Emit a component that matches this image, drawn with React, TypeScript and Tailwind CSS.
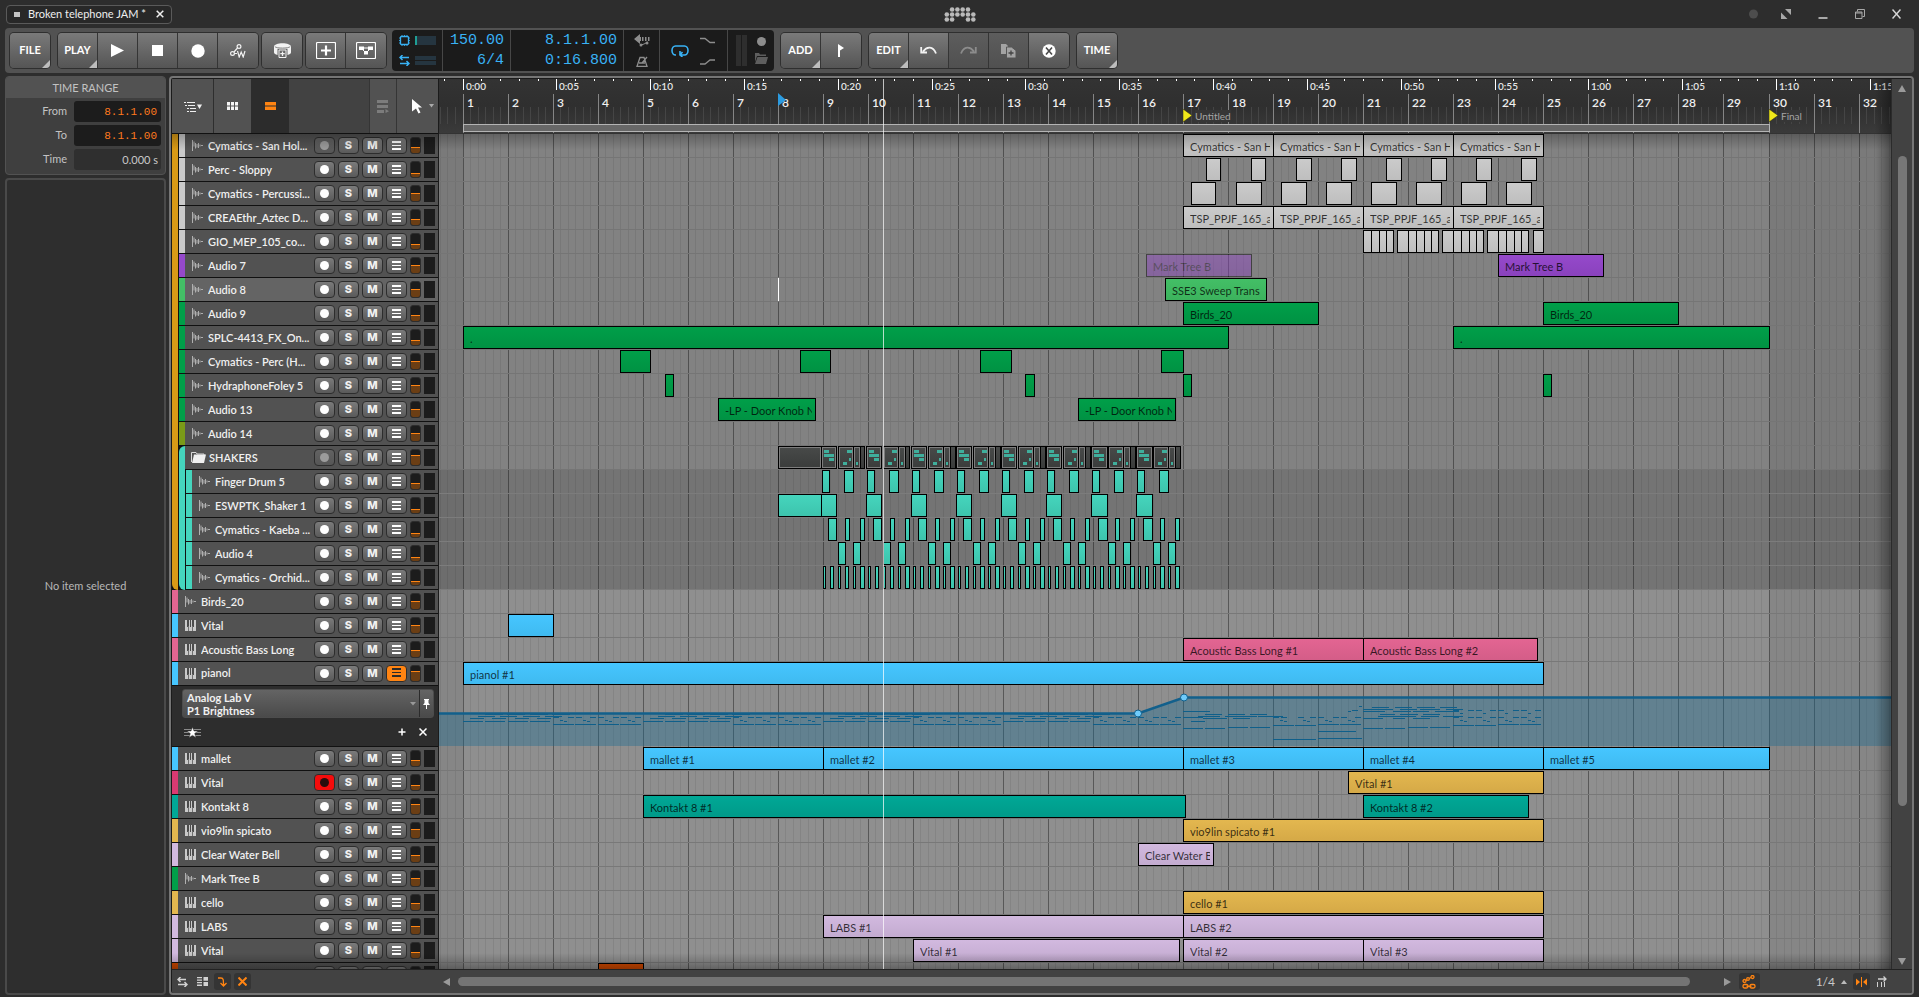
import type { ReactNode } from 'react'

const BAR = 45.035
const ORIGIN = 24
const BARS = Array.from({ length: 32 }, (_, i) => i + 1)
const LOOPS = [9, 10, 11, 12, 13, 14, 15, 16]

// bar position -> pixels from the left edge of the timeline
const bx = (bar: number) => ORIGIN + Math.floor((bar - 1) * BAR + 0.001)
const sx = (sec: number) => ORIGIN + Math.floor((sec / 2.4) * BAR)

type Tone = 'grey' | 'purple' | 'lime' | 'green' | 'teal' | 'sky' | 'pink' | 'gold' | 'sea' | 'lilac' | 'orange' | 'folder'

const TONES: Record<Tone, string> = {
  grey: 'from-[#cbcbcb] to-[#bebebe]',
  purple: 'from-[#9549cb] to-[#8a42bd]',
  lime: 'from-[#43bf66] to-[#3cb25d]',
  green: 'from-[#009f49] to-[#009243]',
  teal: 'from-[#45d5bd] to-[#3dc4ad]',
  sky: 'from-[#46c6ff] to-[#3fbaf0]',
  pink: 'from-[#e36592] to-[#d45d88]',
  gold: 'from-[#e3b74f] to-[#d5a947]',
  sea: 'from-[#00a896] to-[#009a89]',
  lilac: 'from-[#d2b9df] to-[#c3abd0]',
  orange: 'from-[#d44a00] to-[#c94600]',
  folder: 'from-[#484a49] to-[#3a3c3b]',
}

type Clip = { from: number; to: number; name?: string; tone: Tone; faded?: boolean; notes?: number[][] }

type Track = {
  name: string
  color: string
  kind: 'audio' | 'keys' | 'folder'
  vol: number
  rec?: 'off' | 'armed'
  selected?: boolean
  automation?: boolean
  clips?: Clip[]
}

const every = (tone: Tone, bars: number[], parts: number[][]): Clip[] =>
  bars.flatMap((b) => parts.map(([a, z]) => ({ from: b + a, to: b + z, tone })))

const chain = (tone: Tone, name: string, edges: number[]): Clip[] =>
  edges.slice(1).map((to, i) => ({ from: edges[i], to, tone, name }))

const GIO_EDGES = [
  [21, 21.18, 21.34, 21.51, 21.67],
  [21.76, 22, 22.18, 22.34, 22.51, 22.67],
  [22.76, 23, 23.18, 23.34, 23.51, 23.67],
  [23.76, 24, 24.18, 24.34, 24.51, 24.67],
  [24.76, 25],
]

const GROUP_TRACKS: Track[] = [
  { name: 'Cymatics - San Hol...', color: 'bg-[#cacaca]', kind: 'audio', vol: 9, rec: 'off', clips: chain('grey', 'Cymatics - San H', [17, 19, 21, 23, 25]) },
  { name: 'Perc - Sloppy', color: 'bg-[#cacaca]', kind: 'audio', vol: 11, clips: every('grey', [17, 18, 19, 20, 21, 22, 23, 24], [[0.5, 0.83]]) },
  { name: 'Cymatics - Percussi...', color: 'bg-[#cacaca]', kind: 'audio', vol: 7, clips: every('grey', [17, 18, 19, 20, 21, 22, 23, 24], [[0.17, 0.72]]) },
  { name: 'CREAEthr_Aztec D...', color: 'bg-[#cacaca]', kind: 'audio', vol: 9, clips: chain('grey', 'TSP_PPJF_165_a', [17, 19, 21, 23, 25]) },
  { name: 'GIO_MEP_105_co...', color: 'bg-[#cacaca]', kind: 'audio', vol: 10, clips: GIO_EDGES.flatMap((e) => chain('grey', '', e)) },
  {
    name: 'Audio 7', color: 'bg-[#9549cb]', kind: 'audio', vol: 7,
    clips: [
      { from: 16.18, to: 18.51, name: 'Mark Tree B', tone: 'purple', faded: true },
      { from: 24, to: 26.33, name: 'Mark Tree B', tone: 'purple' },
    ],
  },
  { name: 'Audio 8', color: 'bg-[#43bf66]', kind: 'audio', vol: 7, selected: true, clips: [{ from: 16.6, to: 18.85, name: 'SSE3 Sweep Trans', tone: 'lime' }] },
  {
    name: 'Audio 9', color: 'bg-[#009f49]', kind: 'audio', vol: 9,
    clips: [
      { from: 17, to: 20, name: 'Birds_20', tone: 'green' },
      { from: 25, to: 28, name: 'Birds_20', tone: 'green' },
    ],
  },
  {
    name: 'SPLC-4413_FX_On...', color: 'bg-[#009f49]', kind: 'audio', vol: 10,
    clips: [
      { from: 1, to: 18, name: '.', tone: 'green' },
      { from: 23, to: 30, name: '.', tone: 'green' },
    ],
  },
  {
    name: 'Cymatics - Perc (H...', color: 'bg-[#009f49]', kind: 'audio', vol: 7,
    clips: [...every('green', [4, 8, 12], [[0.5, 1.17]]), { from: 16.52, to: 17, tone: 'green' }],
  },
  {
    name: 'HydraphoneFoley 5', color: 'bg-[#009f49]', kind: 'audio', vol: 7,
    clips: [...every('green', [5, 13], [[0.5, 0.68]]), ...every('green', [17, 25], [[0, 0.18]])],
  },
  {
    name: 'Audio 13', color: 'bg-[#009f49]', kind: 'audio', vol: 7,
    clips: [
      { from: 6.67, to: 8.83, name: '-LP - Door Knob N', tone: 'green' },
      { from: 14.67, to: 16.83, name: '-LP - Door Knob N', tone: 'green' },
    ],
  },
  { name: 'Audio 14', color: 'bg-[#7a9a18]', kind: 'audio', vol: 7 },
]

const FOLDER: Track = {
  name: 'SHAKERS', color: 'bg-[#45d5bd]', kind: 'folder', vol: 5, rec: 'off',
  clips: [
    { from: 8, to: 8.963, tone: 'folder', notes: [] },
    ...LOOPS.flatMap((b): Clip[] => [
      { from: b - 0.037, to: b + 0.3, tone: 'folder', notes: [[1, 2, 5], [1, 6, 10], [6, 10, 5]] },
      { from: b + 0.335, to: b + 0.674, tone: 'folder', notes: [[7, 2, 5], [9, 10, 2], [3, 14, 4]] },
      { from: b + 0.674, to: b + 0.82, tone: 'folder', notes: [[1, 14, 2]] },
      { from: b + 0.83, to: b + 0.925, tone: 'folder' },
    ]),
  ],
}

const SHAKERS: Track[] = [
  { name: 'Finger Drum 5', color: 'bg-[#45d5bd]', kind: 'audio', vol: 9, clips: every('teal', LOOPS, [[-0.02, 0.14], [0.47, 0.66]]) },
  { name: 'ESWPTK_Shaker 1', color: 'bg-[#45d5bd]', kind: 'audio', vol: 11, clips: [{ from: 8, to: 8.963, tone: 'teal' }, ...every('teal', LOOPS, [[-0.037, 0.3]])] },
  { name: 'Cymatics - Kaeba ...', color: 'bg-[#45d5bd]', kind: 'audio', vol: 11, clips: every('teal', LOOPS, [[0.11, 0.3], [0.49, 0.58], [0.83, 0.92]]) },
  { name: 'Audio 4', color: 'bg-[#45d5bd]', kind: 'audio', vol: 11, clips: every('teal', LOOPS, [[0.335, 0.49], [0.667, 0.823]]) },
  {
    name: 'Cymatics - Orchid...', color: 'bg-[#45d5bd]', kind: 'audio', vol: 11,
    clips: every('teal', LOOPS, [[0, 0.05], [0.156, 0.23], [0.335, 0.385], [0.49, 0.57], [0.667, 0.72], [0.83, 0.91]]),
  },
]

const ROOT_TRACKS: Track[] = [
  { name: 'Birds_20', color: 'bg-[#e36592]', kind: 'audio', vol: 7 },
  { name: 'Vital', color: 'bg-[#46c6ff]', kind: 'keys', vol: 7, clips: [{ from: 2, to: 3, tone: 'sky' }] },
  {
    name: 'Acoustic Bass Long', color: 'bg-[#e36592]', kind: 'keys', vol: 8,
    clips: [
      { from: 17, to: 21, name: 'Acoustic Bass Long #1', tone: 'pink' },
      { from: 21, to: 24.85, name: 'Acoustic Bass Long #2', tone: 'pink' },
    ],
  },
  { name: 'pianol', color: 'bg-[#46c6ff]', kind: 'keys', vol: 5, automation: true, clips: [{ from: 1, to: 25, name: 'pianol #1', tone: 'sky' }] },
  {
    name: 'mallet', color: 'bg-[#46c6ff]', kind: 'keys', vol: 9,
    clips: [
      { from: 5, to: 9, name: 'mallet #1', tone: 'sky' },
      { from: 9, to: 17, name: 'mallet #2', tone: 'sky' },
      { from: 17, to: 21, name: 'mallet #3', tone: 'sky' },
      { from: 21, to: 25, name: 'mallet #4', tone: 'sky' },
      { from: 25, to: 30, name: 'mallet #5', tone: 'sky' },
    ],
  },
  { name: 'Vital', color: 'bg-[#d93a72]', kind: 'keys', vol: 10, rec: 'armed', clips: [{ from: 20.67, to: 25, name: 'Vital #1', tone: 'gold' }] },
  {
    name: 'Kontakt 8', color: 'bg-[#00a896]', kind: 'keys', vol: 5,
    clips: [
      { from: 5, to: 17.05, name: 'Kontakt 8 #1', tone: 'sea' },
      { from: 21, to: 24.67, name: 'Kontakt 8 #2', tone: 'sea' },
    ],
  },
  { name: 'vio9lin spicato', color: 'bg-[#e3b74f]', kind: 'keys', vol: 6, clips: [{ from: 17, to: 25, name: 'vio9lin spicato #1', tone: 'gold' }] },
  { name: 'Clear Water Bell', color: 'bg-[#d2b9df]', kind: 'keys', vol: 8, clips: [{ from: 16, to: 17.67, name: 'Clear Water B', tone: 'lilac' }] },
  { name: 'Mark Tree B', color: 'bg-[#009f49]', kind: 'audio', vol: 7 },
  { name: 'cello', color: 'bg-[#e3b74f]', kind: 'keys', vol: 8, clips: [{ from: 17, to: 25, name: 'cello #1', tone: 'gold' }] },
  {
    name: 'LABS', color: 'bg-[#d2b9df]', kind: 'keys', vol: 7,
    clips: [
      { from: 9, to: 17, name: 'LABS #1', tone: 'lilac' },
      { from: 17, to: 25, name: 'LABS #2', tone: 'lilac' },
    ],
  },
  {
    name: 'Vital', color: 'bg-[#d2b9df]', kind: 'keys', vol: 9,
    clips: [
      { from: 11, to: 16.92, name: 'Vital #1', tone: 'lilac' },
      { from: 17, to: 21, name: 'Vital #2', tone: 'lilac' },
      { from: 21, to: 25, name: 'Vital #3', tone: 'lilac' },
    ],
  },
  { name: '', color: 'bg-[#d44a00]', kind: 'keys', vol: 7, clips: [{ from: 4, to: 5, tone: 'orange' }] },
]

/* ---------- title bar and toolbar ---------- */

function TitleBar() {
  const dots = [
    [9, [2, 3, 4, 5]],
    [14, [1, 2, 3, 4, 5, 6]],
    [19, [1, 2, 5, 6]],
  ] as [number, number[]][]
  return (
    <header className="flex h-7 shrink-0 items-center px-[6px]">
      <div className="flex flex-1 pr-3">
        <div className="flex h-[19px] items-center rounded-[4px] border border-[#5a5a5a] bg-[#282828] px-[7px] text-[11px] text-[#eee]">
          <span className="mr-[8px] h-[5px] w-[6px] bg-[#c4c4c4]" />
          <span className="leading-4">Broken telephone JAM *</span>
          <button type="button" aria-label="Close project" className="ml-[10px]">
            <svg width="8" height="8" viewBox="0 0 8 8" stroke="#f0f0f0" strokeWidth="1.5"><path d="M.7.7l6.6 6.6M7.3.7L.7 7.3" /></svg>
          </button>
        </div>
      </div>
      <svg width="34" height="28" viewBox="0 0 34 28" fill="#b9b9b9">
        {dots.map(([y, cols]) => cols.map((c) => <circle key={`${y}-${c}`} cx={c * 5.3 - 1.5} cy={y + 0.5} r="2.3" />))}
      </svg>
      <div className="flex flex-1 items-center justify-end gap-[27px] pr-3">
        <svg className="-mr-1" width="9" height="10" viewBox="0 0 9 10"><circle cx="4.500" cy="5" r="4.500" fill="#4d4d4d" /></svg>
        <button type="button" aria-label="Full screen">
          <svg width="10" height="10" viewBox="0 0 10 10" fill="#a8a8a8"><path d="M4 0h6v6zM0 3.500v6.500h6.500z" /></svg>
        </button>
        <button type="button" aria-label="Minimize">
          <svg width="10" height="10" viewBox="0 0 10 10"><path d="M.5 8h9v2h-9z" fill="#a8a8a8" /></svg>
        </button>
        <button type="button" aria-label="Restore">
          <svg width="10" height="10" viewBox="0 0 10 10" fill="none" stroke="#a8a8a8"><path d="M2.500 2.500V.5h7v7h-2M.5 3h6.500v6.500h-6.500zM.5 4h6.500" /></svg>
        </button>
        <button type="button" aria-label="Close">
          <svg width="9" height="10" viewBox="0 0 9 10" stroke="#d6d6d6" strokeWidth="1.500"><path d="M.5.5l8 9M8.500.5l-8 9" /></svg>
        </button>
      </div>
    </header>
  )
}

function ButtonGroup({ children }: { children: ReactNode }) {
  return <div className="flex h-[35px] overflow-hidden rounded-[4px] shadow-[0_0_0_1px_#2f2f2f]">{children}</div>
}

function ToolButton({ label, corner, dim, children }: { label: string; corner?: boolean; dim?: boolean; children?: ReactNode }) {
  return (
    <button
      type="button"
      aria-label={label}
      className={`relative flex w-10 items-center justify-center border-r border-[#353535] text-[11px] font-bold text-white last:border-r-0 ${
        dim ? 'bg-linear-to-b from-[#5d5d5d] to-[#505050]' : 'bg-linear-to-b from-[#7a7a7a] to-[#555]'
      }`}
    >
      {children ?? label}
      {corner && (
        <svg className="absolute right-0 bottom-0" width="8" height="8" viewBox="0 0 8 8"><path d="M8 0v8H0z" fill="#bdbdbd" /></svg>
      )}
    </button>
  )
}

function Display() {
  const field = 'w-full bg-transparent text-right font-["Liberation_Mono",monospace] text-[15px] leading-5 text-[#39b2f5] outline-none'
  return (
    <div className="ml-[6px] flex h-[41px] w-[382px] overflow-hidden rounded-[4px] bg-[#1b1b1b]">
      <div className="flex w-[51px] flex-col justify-around border-r border-[#474747] pl-[7px]">
        <div className="flex items-center gap-[5px]">
          <svg width="11" height="11" viewBox="0 0 11 11" fill="none" stroke="#39b2f5">
            <rect x="1.500" y="1.500" width="8" height="8" rx="1" strokeWidth="1.300" />
            <path d="M3 .2v1M5.500.2v1M8 .2v1M3 9.800v1M5.500 9.800v1M8 9.800v1M.2 3h1M.2 5.500h1M.2 8h1M9.800 3h1M9.800 5.500h1M9.800 8h1" />
          </svg>
          <span className="h-[9px] w-[21px] border-l-2 border-[#1f9e94] bg-[#253540]" />
        </div>
        <div className="flex items-center gap-[5px]">
          <svg width="11" height="11" viewBox="0 0 11 11" fill="none" stroke="#39b2f5" strokeWidth="1.500"><path d="M10 2.500H1M3.500 0L1 2.500 3.500 5M1 8.500h9M7.500 6L10 8.500 7.500 11" /></svg>
          <span className="flex flex-col gap-px">
            <span className="h-[4px] w-[21px] bg-[#253540]" />
            <span className="h-[4px] w-[21px] bg-[#253540]" />
          </span>
        </div>
      </div>
      <div className="flex w-[68px] flex-col justify-center border-r border-[#474747] pt-px pr-[6px]">
        <input aria-label="Tempo" className={field} defaultValue="150.00" />
        <input aria-label="Time signature" className={field} defaultValue="6/4" />
      </div>
      <div className="flex w-[113px] flex-col justify-center border-r border-[#474747] pt-px pr-[6px]">
        <input aria-label="Song position" className={field} defaultValue="8.1.1.00" />
        <input aria-label="Song time" className={field} defaultValue="0:16.800" />
      </div>
      <div className="flex w-9 flex-col items-center justify-around border-r border-[#474747]">
        <svg width="16" height="13" viewBox="0 0 16 13" fill="#8d8d8d"><path d="M0 5l6-5v3h1v4H6v3zM8 3h1.500v4H8zM11 3h1.500v4H11zM14 3h1.500v4H14z" /><path d="M7 11l3-1 4-2" stroke="#8d8d8d" fill="none" /><circle cx="7" cy="11" r="1.500" /><circle cx="13" cy="9" r="1.500" /></svg>
        <svg width="12" height="11" viewBox="0 0 12 11" fill="none" stroke="#8d8d8d" strokeWidth="1.300"><path d="M1 10.300h10L8 1.500H4zM3 7h6M6 7L11 1" /></svg>
      </div>
      <div className="flex w-[68px] items-center justify-between border-r border-[#474747] pr-[12px] pl-[11px]">
        <svg width="18" height="12" viewBox="0 0 18 12" fill="none" stroke="#39b2f5" strokeWidth="1.600"><path d="M5 10H4.500A3.500 4.500 0 0 1 4.500 1h9a3.500 4.500 0 0 1 0 9H9M11.500 7L9 10l2.500 2M9 10V6" /></svg>
        <svg width="15" height="30" viewBox="0 0 15 30" fill="none" stroke="#8d8d8d" strokeWidth="1.300"><path d="M0 2.500h5l5 4h5M0 28h5l5-4h5" /></svg>
      </div>
      <div className="flex flex-1 items-center justify-between pr-[6px] pl-[8px]">
        <span className="flex gap-px"><span className="h-[31px] w-[5px] bg-[#2e2e2e]" /><span className="h-[31px] w-[5px] bg-[#2e2e2e]" /></span>
        <span className="flex flex-col items-center gap-[7px]">
          <svg width="9" height="9" viewBox="0 0 9 9"><circle cx="4.500" cy="4.500" r="4.500" fill="#8d8d8d" /></svg>
          <svg width="14" height="11" viewBox="0 0 14 11" fill="#5e5e5e"><path d="M1 0h4l1 1.500h6V3H3L1 9zM3.500 4H14l-2 7H1z" /></svg>
        </span>
      </div>
    </div>
  )
}

function Toolbar() {
  return (
    <div className="mx-[5px] flex h-[45px] shrink-0 items-center rounded-[4px] bg-[#525252] pl-[5px]">
      <ButtonGroup><ToolButton label="FILE" corner /></ButtonGroup>
      <div className="w-2" />
      <ButtonGroup>
        <ToolButton label="PLAY" corner />
        <ToolButton label="Start"><svg width="13" height="13" viewBox="0 0 13 13"><path d="M0 0l13 6.500L0 13z" fill="#fff" /></svg></ToolButton>
        <ToolButton label="Stop"><svg width="11" height="11"><path d="M0 0h11v11H0z" fill="#fff" /></svg></ToolButton>
        <ToolButton label="Record"><svg width="14" height="14"><circle cx="7" cy="7" r="6.700" fill="#fff" /></svg></ToolButton>
        <ToolButton label="Write automation">
          <svg width="16" height="14" viewBox="0 0 16 14" fill="none" stroke="#f2f2f2" strokeWidth="1.200"><circle cx="2.500" cy="9.500" r="1.900" /><circle cx="9" cy="2.500" r="1.900" /><path d="M4 8l3.500-4M4.400 9.500H7M7.500 7l1.700 6 2-5 2 5L15 7" /></svg>
        </ToolButton>
      </ButtonGroup>
      <div className="w-1" />
      <ButtonGroup>
        <ToolButton label="Save">
          <svg width="17" height="15" viewBox="0 0 17 15">
            <path d="M0 3.500C0 1.500 4 .2 8.500.2S17 1.500 17 3.500V9.500c0 1.200-1.500 2-3.500 2.500V5.800h-10V12C1.500 11.500 0 10.700 0 9.500z" fill="#f2f2f2" />
            <path d="M.8 3.700c2 1.800 13.400 1.800 15.400 0" stroke="#8a8a8a" fill="none" />
            <path d="M5 7h7v7.500H5z" stroke="#f2f2f2" fill="#666" />
            <path d="M8.500 8.500v4.500M6.300 10.700h4.400" stroke="#f2f2f2" strokeWidth="1.300" />
          </svg>
        </ToolButton>
      </ButtonGroup>
      <div className="w-1" />
      <ButtonGroup>
        <ToolButton label="Add device"><svg width="20" height="17" viewBox="0 0 20 17" fill="none" stroke="#fff"><rect x=".5" y=".5" width="19" height="16" rx="1" strokeWidth="1.200" /><path d="M10 3.500v10M5 8.500h10" strokeWidth="2.200" /></svg></ToolButton>
        <ToolButton label="Add modulator"><svg width="20" height="17" viewBox="0 0 20 17" fill="#fff"><rect x=".5" y=".5" width="19" height="16" rx="1" stroke="#fff" fill="none" strokeWidth="1.200" /><path d="M3 4.500h5v3.500H3zM12 4.500h5v3.500h-5zM8 9h4v3.500H8z" /><path d="M8 6h4M7 8l2 2M13 8l-2 2" stroke="#fff" /></svg></ToolButton>
      </ButtonGroup>
      <Display />
      <div className="w-[7px]" />
      <ButtonGroup>
        <ToolButton label="ADD" corner />
        <ToolButton label="Add cue marker"><svg width="7" height="13" viewBox="0 0 7 13"><path d="M0 0l6 4-4 2.500V13H0z" fill="#fff" /></svg></ToolButton>
      </ButtonGroup>
      <div className="w-2" />
      <ButtonGroup>
        <ToolButton label="EDIT" corner />
        <ToolButton label="Undo"><svg width="17" height="9" viewBox="0 0 17 9" fill="none" stroke="#f2f2f2" strokeWidth="1.800"><path d="M3 5.500C7 0 13 0 16 7.500M1.200 1v5.500H7" /></svg></ToolButton>
        <ToolButton label="Redo" dim><svg width="17" height="9" viewBox="0 0 17 9" fill="none" stroke="#8c8c8c" strokeWidth="1.800"><path d="M14 5.500C10 0 4 0 1 7.500M15.800 1v5.500H10" /></svg></ToolButton>
        <ToolButton label="Duplicate" dim><svg width="15" height="14" viewBox="0 0 15 14" fill="#a3a3a3"><path d="M0 0h5l2 2v8H0z" /><path d="M5.500 3h5L15 6.500V14H5.500z" stroke="#565656" /><path d="M10 6.500v5M7.500 9h5" stroke="#444" strokeWidth="1.300" /></svg></ToolButton>
        <ToolButton label="Delete"><svg width="14" height="14" viewBox="0 0 14 14"><circle cx="7" cy="7" r="6.700" fill="#fff" /><path d="M4 3.500l6 7M10 3.500l-6 7" stroke="#4a4a4a" strokeWidth="1.600" /></svg></ToolButton>
      </ButtonGroup>
      <div className="w-2" />
      <ButtonGroup><ToolButton label="TIME" corner /></ButtonGroup>
    </div>
  )
}

/* ---------- inspector ---------- */

function Inspector() {
  const rows = [
    ['From', '8.1.1.00', 'bg-[#1c1c1c] pr-[4px] font-["Liberation_Mono",monospace] text-[#ff7a1e]'],
    ['To', '8.1.1.00', 'bg-[#1c1c1c] pr-[4px] font-["Liberation_Mono",monospace] text-[#ff7a1e]'],
    ['Time', '0.000 s', 'bg-[#2f2f2f] pr-[3px] text-[#c9c9c9]'],
  ]
  return (
    <aside className="flex w-[161px] shrink-0 flex-col gap-[3px]">
      <div className="overflow-hidden rounded-[4px] border border-[#525252] bg-[#3f3f3f]">
        <h2 className="h-[21px] bg-[#525252] text-center text-[11px] leading-[22px] text-[#c2c2c2]">TIME RANGE</h2>
        <div className="flex flex-col gap-[3px] pt-[3px] pr-[4px] pb-1">
          {rows.map(([label, value, style]) => (
            <label key={label} className="flex items-center gap-[7px] text-[11px] text-[#c2c2c2]">
              <span className="flex-1 text-right">{label}</span>
              <input className={`h-[21px] w-[87px] rounded-[3px] text-right text-[11px] outline-none ${style}`} defaultValue={value} />
            </label>
          ))}
        </div>
      </div>
      <div className="flex flex-1 items-center justify-center rounded-[4px] border-2 border-[#4a4a4a] bg-[#2e2e2e] text-[11px] text-[#b8b8b8]">
        No item selected
      </div>
    </aside>
  )
}

/* ---------- track headers ---------- */

function KindIcon({ kind }: { kind: Track['kind'] }) {
  if (kind === 'folder') {
    return (
      <svg className="-ml-px mr-[3px] shrink-0" width="15" height="11" viewBox="0 0 15 11"><path d="M.5 10V.5H5l1 1.500h7V3" fill="none" stroke="#d8d8d8" /><path d="M3 2.500h12l-2 8.500H1z" fill="#efefef" /></svg>
    )
  }
  if (kind === 'keys') {
    return (
      <svg className="mr-[5px] shrink-0" width="11" height="11" viewBox="0 0 11 11"><path d="M0 0h11v11H0z" fill="#c9c9c9" /><path d="M2 0h2v7H2zM7 0h2v7H7zM5 0h1v7H5z" fill="#4b4b4b" /><path d="M3.500 6v5M7.500 6v5" stroke="#707070" /></svg>
    )
  }
  return (
    <svg className="mr-[5px] shrink-0" width="11" height="11" viewBox="0 0 11 11" stroke="#b0b0b0"><path d="M.5 0v11M2 1.500v5M3.500 3v5.500M5 4v3.500M6.500 3v5M8 4.500v2M9 5.500h2" /></svg>
  )
}

function MixButton({ label, tone, children }: { label: string; tone?: string; children: ReactNode }) {
  return (
    <button
      type="button"
      aria-label={label}
      className={`mr-[3px] flex h-[17px] w-[21px] shrink-0 items-center justify-center rounded-[4px] border border-[#2d2d2d] font-[Inter,sans-serif] text-[11px] font-extrabold text-[#f2f2f2] ${
        tone ?? 'bg-linear-to-b from-[#7b7b7b] to-[#5a5a5a]'
      }`}
    >
      {children}
    </button>
  )
}

function TrackHeader({ track }: { track: Track }) {
  const off = track.rec === 'off'
  const armed = track.rec === 'armed'
  return (
    <div className="flex bg-[#111]">
      {track.kind !== 'folder' && <div className={`mb-px w-[6px] shrink-0 ${track.automation ? '-mb-[60px] relative z-10' : ''} ${track.color}`} />}
      <div className={`mb-px flex h-[23px] min-w-0 flex-1 items-center pl-[7px] ${track.automation ? 'mb-0 h-6 pb-px' : ''} ${track.selected ? 'bg-[#646464]' : 'bg-[#525252]'}`}>
        <KindIcon kind={track.kind} />
        <span className="min-w-0 flex-1 overflow-hidden text-[11px] leading-4 font-semibold whitespace-nowrap text-[#f0f0f0]">{track.name}</span>
        <div className="flex w-[124px] shrink-0 items-center">
          <MixButton label="Record arm" tone={armed ? 'bg-[#f50c0c]' : off ? 'bg-linear-to-b from-[#626262] to-[#565656]' : undefined}>
            <svg width="9" height="9"><circle cx="4.500" cy="4.500" r="4.500" fill={armed ? '#2a0d0d' : off ? '#9b9b9b' : '#fff'} /></svg>
          </MixButton>
          <MixButton label="Solo">S</MixButton>
          <MixButton label="Mute">M</MixButton>
          <MixButton label="Automation lanes" tone={track.automation ? 'bg-[#ff8412]' : undefined}>
            <svg width="9" height="10"><path d="M0 0h9v2H0zM0 4h9v1H0zM0 7h9v2H0z" fill={track.automation ? '#2b2b2b' : '#fff'} /></svg>
          </MixButton>
          <span className="flex h-[17px] w-[11px] flex-col justify-end overflow-hidden rounded-[3px] border border-[#2d2d2d] bg-[#1c1c1c]">
            <span className="border-t border-[#ff8412] bg-[#6b3e14]" style={{ height: 15 - track.vol }} />
          </span>
          <span className="ml-[3px] h-[17px] w-[11px] bg-[#1c1c1c]" />
        </div>
      </div>
    </div>
  )
}

function AutomationHeader() {
  return (
    <div className="flex h-[61px] flex-col border-b border-[#111] bg-[#2d2d2d] pt-[3px] pr-[4px] pl-[10px]">
      <div className="flex h-[29px] shrink-0 overflow-hidden rounded-[3px] border border-[#4c4c4c] bg-linear-to-b from-[#646464] to-[#4a4a4a]">
        <button type="button" className="flex flex-1 items-center border-r border-[#2b2b2b] pr-[3px] pl-1 text-left text-[11px] leading-[13px] font-bold text-[#f0f0f0]">
          <span className="flex-1">Analog Lab V<br />P1 Brightness</span>
          <svg width="6" height="4"><path d="M0 0h6L3 3.500z" fill="#999" /></svg>
        </button>
        <button type="button" aria-label="Pin lane" className="flex w-[13px] items-center justify-center">
          <svg width="7" height="10" viewBox="0 0 7 10" fill="#fff"><path d="M1 0h5v1H5.500v3L7 6H4v4H3V6H0l1.500-2V1H1z" /></svg>
        </button>
      </div>
      <div className="flex flex-1 items-center justify-between">
        <svg className="ml-[2px]" width="17" height="11" viewBox="0 0 17 11"><path d="M0 2.500h17M0 5.500h17M0 8.500h17" stroke="#8a8a8a" /><path d="M8.500 0l1.500 4h4l-3.300 2.500L12 10.800 8.500 8.300 5 10.800l1.300-4.300L3 4h4z" fill="#fff" stroke="#2d2d2d" strokeWidth=".5" /></svg>
        <span className="flex items-center gap-[13px] pr-[7px]">
          <button type="button" aria-label="Add lane"><svg width="8" height="8" stroke="#fff" strokeWidth="1.500"><path d="M4 .5v7M.5 4h7" /></svg></button>
          <button type="button" aria-label="Remove lane"><svg width="8" height="8" stroke="#fff" strokeWidth="1.500"><path d="M.5.5l7 7M7.500.5l-7 7" /></svg></button>
        </span>
      </div>
    </div>
  )
}

function TrackToolbar() {
  return (
    <div className="flex h-[54px] shrink-0 bg-[#424242] text-white">
      <button type="button" aria-label="Track view options" className="flex w-[42px] items-center justify-center border-r border-[#2e2e2e] bg-[#525252]">
        <svg width="18" height="11" viewBox="0 0 18 11"><path d="M0 1.500h2M3 1.500h8M1 4.500h2M4 4.500h7M3 7.500h2M6 7.500h6M3 10.500h2M6 10.500h6" stroke="#f0f0f0" /><path d="M13 3.500h5L15.500 8z" fill="#f0f0f0" /></svg>
      </button>
      <button type="button" aria-label="Launcher" className="flex w-[37px] items-center justify-center bg-[#525252]">
        <svg width="11" height="8"><path d="M0 0h3v3.500H0zM4 0h3v3.500H4zM8 0h3v3.500H8zM0 4.500h3V8H0zM4 4.500h3V8H4zM8 4.500h3V8H8z" fill="#f5f5f5" /></svg>
      </button>
      <button type="button" aria-label="Arranger" className="flex w-[38px] items-center justify-center bg-[#2c2c2c]">
        <svg width="11" height="8"><path d="M0 0h11v3.500H0zM0 4.500h11V8H0z" fill="#ff8412" /></svg>
      </button>
      <div className="flex-1" />
      <button type="button" aria-label="Follow" className="flex w-[27px] items-center justify-center border-l border-[#353535] bg-[#525252]">
        <svg width="12" height="13" viewBox="0 0 12 13" fill="#7c7c7c"><path d="M0 0h11v3H0zM0 5h11v3H0zM0 10h7v3H0zM8.500 9L12 11.200 8.500 13z" /></svg>
      </button>
      <button type="button" aria-label="Pointer tool" className="flex w-[42px] items-center justify-end gap-[7px] border-l border-[#353535] bg-[#525252] pr-[4px]">
        <svg width="10" height="15" viewBox="0 0 10 15"><path d="M0 0l10 8.500H6l2.500 5-2 1-2.500-5L0 12.500z" fill="#fff" /></svg>
        <svg width="5" height="4"><path d="M0 0h5L2.500 3.500z" fill="#aaa" /></svg>
      </button>
    </div>
  )
}

/* ---------- timeline ---------- */

function Ruler() {
  return (
    <div className="relative h-[54px] shrink-0 overflow-hidden bg-linear-to-b from-[#333] via-[#2f2f2f] to-[#3a3a3a]">
      {Array.from({ length: 77 }, (_, i) => i - 1).map((s) => (
        <span key={s} className={`absolute top-0 w-px bg-white ${s % 5 === 0 ? 'h-[11px]' : 'h-[2px]'}`} style={{ left: sx(s) }} />
      ))}
      {Array.from({ length: 16 }, (_, i) => i * 5).map((s) => (
        <span key={s} className="absolute top-[2px] text-[10px] leading-[11px] font-semibold text-[#e6e6e6]" style={{ left: sx(s) + 3 }}>
          {Math.floor(s / 60)}:{String(s % 60).padStart(2, '0')}
        </span>
      ))}
      {Array.from({ length: 200 }, (_, i) => i - 3).map((b) => (
        <span key={b} className="absolute top-[28px] h-[17px] w-px bg-[#454545]" style={{ left: bx(1 + b / 6) }} />
      ))}
      {BARS.map((b) => (
        <span key={b} className="absolute top-[15px] h-[39px] border-l border-[#858585] pl-[3px] text-[12px] leading-[18px] font-semibold text-[#f0f0f0]" style={{ left: bx(b) }}>
          {b}
        </span>
      ))}
      <svg className="absolute top-[14px]" style={{ left: bx(8) }} width="9" height="13"><path d="M0 0l8 7-8 6z" fill="#2b9be0" /></svg>
      {[{ bar: 17, name: 'Untitled' }, { bar: 30, name: 'Final' }].map((m) => (
        <div key={m.name} className="absolute top-[30px] flex items-center gap-[3px] text-[10px] leading-3 text-[#a5a5a5]" style={{ left: bx(m.bar) }}>
          <svg width="9" height="13"><path d="M0 0l9 6.500L0 13z" fill="#f0e81a" stroke="#2b2b10" strokeWidth=".5" /></svg>
          <span className="bg-[#363636]">{m.name}</span>
        </div>
      ))}
      <div className="absolute top-[45px] h-[8px] border border-[#b3b3b3] bg-[#676767]" style={{ left: bx(1), width: bx(30) - bx(1) + 1 }} />
    </div>
  )
}

function ClipBlock({ clip }: { clip: Clip }) {
  const width = bx(clip.to) - bx(clip.from) + 1
  return (
    <div
      className={`absolute top-0 z-10 h-[23px] overflow-hidden border border-black bg-linear-to-b ${TONES[clip.tone]} ${clip.faded ? 'opacity-45' : ''}`}
      style={{ left: bx(clip.from), width }}
    >
      {clip.name && <div className="mr-[3px] ml-[6px] overflow-hidden text-[11px] leading-[24px] whitespace-nowrap text-black/75">{clip.name}</div>}
      {clip.notes && (
        <div className="absolute inset-0 overflow-hidden border border-[#7d7d7d]">
          <svg className="block" width="20" height="19" fill="#3fae9c">
            {clip.notes.map(([x, y, w]) => <rect key={`${x}-${y}`} x={x} y={y} width={w} height="3" />)}
          </svg>
        </div>
      )}
    </div>
  )
}

function Lane({ track, bg, line }: { track: Track; bg: string; line: string }) {
  return (
    <div className={`relative flex h-6 flex-col justify-end ${bg}`}>
      {!track.automation && <div className={`relative z-[5] h-px ${line}`} />}
      {track.selected && <div className="absolute top-0 z-10 h-[23px] w-px bg-white" style={{ left: bx(8) }} />}
      {track.clips?.map((c) => <ClipBlock key={`${c.from}`} clip={c} />)}
    </div>
  )
}

// note segments as [x offset, y, width], each set spans four bars
const VERSE = [
  ...[0, 22, 45, 67].map((x) => [x, 35, 20]),
  ...[90, 112, 135, 157].map((x) => [x, 38, 21]),
  ...[7, 29, 52, 74].map((x) => [x, 32, 14]),
  ...[15, 37, 60, 82].map((x) => [x, 30, 17]),
  ...[22, 44, 67, 89].map((x) => [x, 28, 18]),
  ...[90, 105, 113, 127, 135, 150, 158, 172].map((x) => [x, 31, 6]),
  ...[97, 120, 142, 165].map((x) => [x, 34, 3]),
  ...[101, 124, 146, 169].map((x) => [x, 35, 3]),
]
const CHORUS_A = [
  [0, 42, 20], [22, 42, 20], [45, 41, 20], [67, 41, 20], [90, 39, 21], [112, 39, 21], [135, 38, 21], [157, 38, 21],
  [0, 25, 27], [22, 28, 17], [45, 28, 17], [67, 28, 17], [15, 30, 22], [42, 30, 32], [75, 30, 25], [0, 31, 20], [20, 32, 24], [50, 32, 17],
  [8, 35, 14], [90, 53, 43], [135, 45, 38], [135, 52, 44], [165, 25, 3], [169, 24, 6], [176, 20, 3],
  ...[90, 98, 115, 127, 135, 150, 158, 172].map((x) => [x, 31, 6]),
  ...[97, 120, 142, 165].map((x) => [x, 34, 3]),
  ...[101, 124, 146, 169].map((x) => [x, 35, 3]),
]
const CHORUS_B = [
  [0, 42, 20], [22, 42, 20], [45, 41, 20], [67, 41, 20], [90, 39, 21], [112, 39, 21], [135, 38, 21], [157, 38, 21],
  [9, 21, 17], [32, 21, 17], [54, 21, 18], [77, 21, 17], [0, 23, 30], [37, 23, 17], [57, 23, 20], [83, 23, 17],
  [0, 25, 22], [30, 25, 18], [50, 25, 16], [72, 25, 24], [17, 28, 15], [37, 28, 18], [60, 28, 17],
  [15, 30, 38], [58, 30, 18], [80, 30, 20], [0, 32, 20], [30, 32, 12], [50, 32, 17],
  ...[90, 105, 113, 127, 135, 150, 158, 172].flatMap((x) => [[x, 24, 6], [x, 31, 6]]),
  ...[97, 120, 142, 165].flatMap((x) => [[x, 27, 3], [x, 34, 3]]),
  ...[101, 124, 146, 169].map((x) => [x, 35, 3]),
]

function AutomationLane() {
  const parts: [number, number[][]][] = [[1, VERSE], [5, VERSE], [9, VERSE], [13, VERSE], [17, CHORUS_A], [21, CHORUS_B]]
  const a = bx(16)
  const b = bx(17) + 1
  return (
    <div className="relative h-[61px] overflow-hidden bg-[#8f8f8f]">
      <svg className="absolute top-0 left-0 z-[5]" width="2400" height="60">
        <path d={`M0 27H${a}L${b} 11H2400V60H0z`} fill="#1e6b91" fillOpacity=".4" />
        {parts.map(([bar, notes]) => (
          <g key={bar} fill="#0f5f8a">
            {notes.map(([x, y, w], i) => <rect key={i} x={bx(bar) + x} y={y} width={w} height="1" />)}
          </g>
        ))}
        <path d={`M0 27.500H${a}L${b} 11.500H2400`} fill="none" stroke="#12608c" strokeWidth="2.500" />
        <circle cx={a} cy="27.500" r="3.500" fill="#6fcbfb" stroke="#12608c" />
        <circle cx={b} cy="11.500" r="3.500" fill="#6fcbfb" stroke="#12608c" />
      </svg>
    </div>
  )
}

function Grid() {
  return (
    <div className="pointer-events-none absolute inset-0">
      <div className="absolute inset-y-0 left-0 bg-black/6" style={{ width: bx(1) }} />
      <div className="absolute inset-y-0 right-0 bg-black/6" style={{ left: bx(30) }} />
      {Array.from({ length: 197 }, (_, i) => i - 3).map((b) => (
        <div key={b} className={`absolute inset-y-0 w-px ${b % 6 === 0 ? 'bg-black/38' : 'bg-black/7'}`} style={{ left: bx(1 + b / 6) }} />
      ))}
    </div>
  )
}

function Arranger() {
  return (
    <section className="flex min-w-0 flex-1 flex-col overflow-hidden rounded-[4px] border-2 border-[#757575] bg-[#1b1b1b] pt-px pl-px">
      <div className="flex min-h-0 flex-1">
        <div className="flex w-[267px] shrink-0 flex-col border-r border-[#1b1b1b]">
          <TrackToolbar />
          <div className="relative min-h-0 flex-1 overflow-hidden border-t border-[#111] bg-[#111]">
            <div className="flex">
              <div className="mr-px w-[6px] shrink-0 rounded-bl-[6px] bg-[#d99a16]" />
              <div className="min-w-0 flex-1">
                {GROUP_TRACKS.map((t) => <TrackHeader key={t.name} track={t} />)}
                <div className="flex">
                  <div className="w-[6px] shrink-0 rounded-l-[6px] bg-[#45d5bd]" />
                  <div className="min-w-0 flex-1">
                    <TrackHeader track={FOLDER} />
                    <div className="pl-px">{SHAKERS.map((t) => <TrackHeader key={t.name} track={t} />)}</div>
                  </div>
                </div>
              </div>
            </div>
            {ROOT_TRACKS.map((t, i) => (
              <div key={i}>
                <TrackHeader track={t} />
                {t.automation && <AutomationHeader />}
              </div>
            ))}
            <div className="pointer-events-none absolute inset-x-0 top-0 z-20 h-4 bg-linear-to-b from-black/25 to-transparent" />
            <div className="pointer-events-none absolute inset-x-0 bottom-0 z-20 h-4 bg-linear-to-t from-black/30 to-transparent" />
          </div>
        </div>
        <div className="relative flex min-w-0 flex-1 flex-col overflow-hidden">
          <Ruler />
          <div className="relative min-h-0 flex-1 overflow-hidden border-t border-[#333]">
            {[...GROUP_TRACKS, FOLDER].map((t) => <Lane key={t.name} track={t} bg="bg-[#828282]" line="bg-[#757575]" />)}
            {SHAKERS.map((t) => <Lane key={t.name} track={t} bg="bg-[#747474]" line="bg-[#7c7c7c]" />)}
            {ROOT_TRACKS.map((t, i) => (
              <div key={i}>
                <Lane track={t} bg="bg-[#8f8f8f]" line="bg-[#787878]" />
                {t.automation && <AutomationLane />}
              </div>
            ))}
            <Grid />
            <div className="pointer-events-none absolute inset-x-0 top-0 z-20 h-4 bg-linear-to-b from-black/25 to-transparent" />
            <div className="pointer-events-none absolute inset-x-0 bottom-0 z-20 h-4 bg-linear-to-t from-black/30 to-transparent" />
          </div>
          <div className="pointer-events-none absolute inset-y-0 right-0 z-20 w-4 bg-linear-to-l from-black/35 to-transparent" />
          <div className="pointer-events-none absolute inset-y-0 z-20 w-px bg-white/70" style={{ left: bx(10.34) }} />
        </div>
        <div className="flex w-[21px] shrink-0 flex-col items-center border-l border-[#2b2b2b] bg-[#424242] pt-[6px] pb-1">
          <svg width="8" height="7"><path d="M4 0l4 7H0z" fill="#9a9a9a" /></svg>
          <div className="my-[4px] flex min-h-0 w-full flex-1 flex-col items-center">
            <div className="grow-[60]" />
            <div className="w-[9px] grow-[649] rounded-full bg-[#777]" />
            <div className="grow-[148]" />
          </div>
          <svg width="8" height="7"><path d="M0 0h8L4 7z" fill="#9a9a9a" /></svg>
        </div>
      </div>
      <footer className="flex h-[24px] shrink-0 items-center border-t border-[#222] bg-[#424242] pl-[5px]">
        <div className="flex w-[262px] items-center">
          <button type="button" aria-label="Show sends" className="mr-[9px]">
            <svg width="11" height="10" viewBox="0 0 11 10" fill="none" stroke="#d2d2d2" strokeWidth="1.500"><path d="M9 2.500H1M3.500 0L1 2.500 3.500 5M1 7.500h9M7.500 5L10 7.500 7.500 10" /></svg>
          </button>
          <button type="button" aria-label="Show routing" className="mr-[6px]">
            <svg width="11" height="9" viewBox="0 0 11 9" fill="#d2d2d2"><path d="M0 0h5v1.300H0zM0 2.500h5v1.300H0zM0 5h5v1.300H0zM0 7.500h5V9H0zM6.500 0H11v3.800H6.500zM6.500 5H11v4H6.500z" /></svg>
          </button>
          <button type="button" aria-label="Follow playback" className="mr-[3px] flex h-[17px] w-[17px] items-center justify-center rounded-[3px] bg-[#343434]">
            <svg width="9" height="10" fill="none" stroke="#ff8412" strokeWidth="1.300"><path d="M0 1h3c2.500 0 2.500 2 2.500 8M2.500 6l3 3 3-3" /></svg>
          </button>
          <button type="button" aria-label="Crossfade" className="flex h-[17px] w-[17px] items-center justify-center rounded-[3px] bg-[#343434]">
            <svg width="9" height="9" fill="none" stroke="#ff8412" strokeWidth="2"><path d="M.5.500l8 8M8.500.500l-8 8" /></svg>
          </button>
        </div>
        <svg className="ml-[4px] shrink-0" width="7" height="8"><path d="M7 0v8L0 4z" fill="#9a9a9a" /></svg>
        <div className="mx-2 flex flex-1">
          <div className="h-[9px] grow-[1231] rounded-full bg-[#747474]" />
          <div className="grow-[26]" />
        </div>
        <svg className="shrink-0" width="7" height="8"><path d="M0 0v8l7-4z" fill="#9a9a9a" /></svg>
        <button type="button" aria-label="Link automation" className="ml-[8px] flex h-[17px] w-[21px] items-center justify-center rounded-[3px] bg-[#343434]">
          <svg width="14" height="14" viewBox="0 0 14 14" fill="none" stroke="#ff8412" strokeWidth="1.300"><circle cx="2.500" cy="6" r="1.500" /><circle cx="6" cy="4" r="1.300" /><circle cx="10.500" cy="2" r="1.500" /><path d="M4 5.500l1-.8M7 3.500l2-1" /><rect x="1" y="9.500" width="5" height="3.500" rx="1.500" /><rect x="8" y="9.500" width="5" height="3.500" rx="1.500" /><path d="M4.500 11.300h5" /></svg>
        </button>
        <span className="ml-[56px] text-[12px] text-[#c9c9c9]">1/4</span>
        <svg className="ml-[6px]" width="6" height="4"><path d="M3 0l3 4H0z" fill="#bbb" /></svg>
        <button type="button" aria-label="Snap" className="ml-[6px] flex h-[17px] w-[17px] items-center justify-center rounded-[3px] bg-[#343434]">
          <svg width="11" height="10" fill="#ff8412"><path d="M5 0h1v10H5zM0 1.500L4 5 0 8.500zM11 1.500L7 5l4 3.500z" /></svg>
        </button>
        <button type="button" aria-label="Snap to grid" className="mr-[25px] ml-[7px]">
          <svg width="10" height="11" viewBox="0 0 10 11" fill="none" stroke="#d2d2d2"><path d="M1 3h8M6.500.5L9 3 6.500 5.500" strokeWidth="1.300" /><path d="M.5 6v5M4.500 6v5M7.500 6v5" /></svg>
        </button>
      </footer>
    </section>
  )
}

export default function App() {
  return (
    <div className="flex h-screen flex-col overflow-hidden bg-[#2d2d2d] font-[Lato,sans-serif]">
      <TitleBar />
      <Toolbar />
      <main className="flex min-h-0 flex-1 gap-[3px] px-[5px] pt-[3px] pb-[2px]">
        <Inspector />
        <Arranger />
      </main>
    </div>
  )
}
